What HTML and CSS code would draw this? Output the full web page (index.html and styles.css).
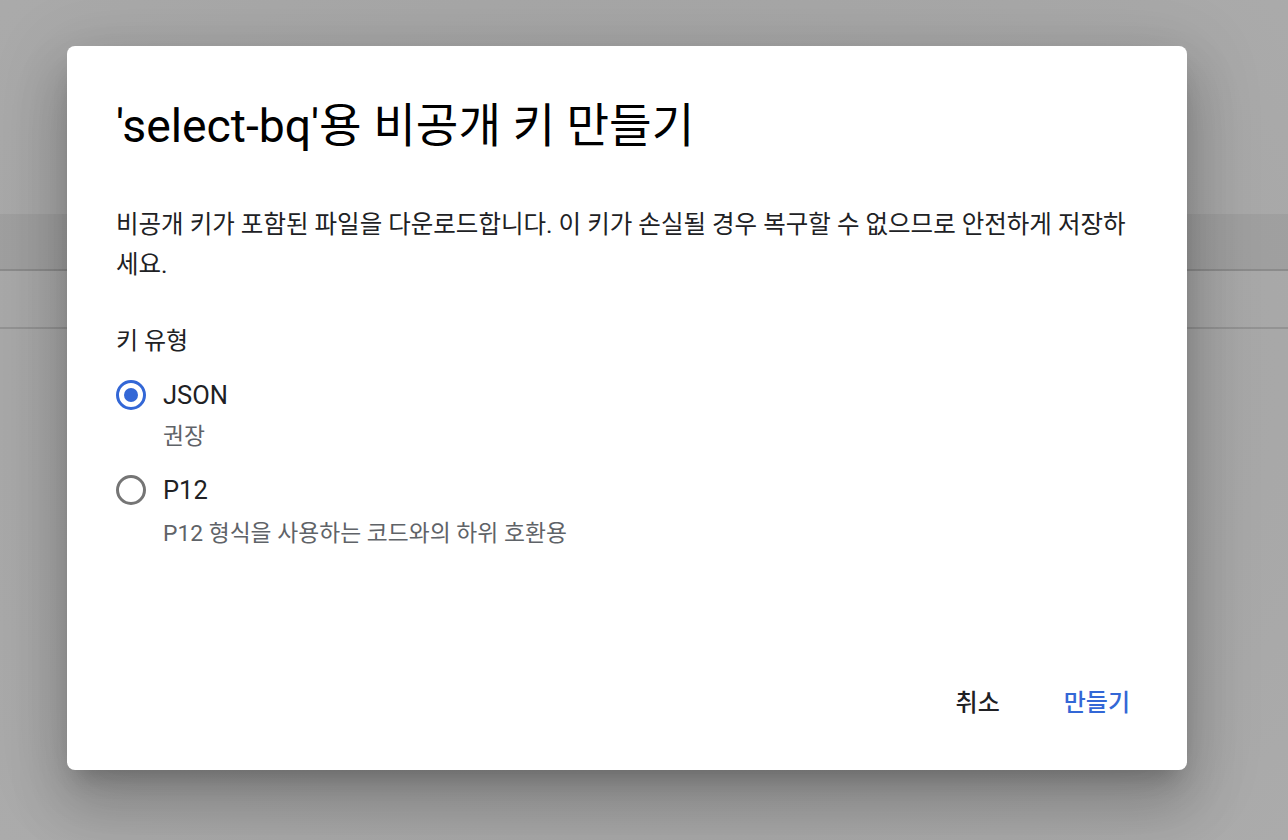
FILE: index.html
```html
<!DOCTYPE html>
<html lang="ko">
<head>
<meta charset="utf-8">
<title>비공개 키 만들기</title>
<link rel="stylesheet" href="styles.css">
</head>
<body>
<div class="page">
  <div class="page-top"></div>
  <div class="page-band"></div>
  <div class="page-row"></div>
  <div class="page-rest"></div>
</div>
<div class="dialog" role="dialog">
  <h1 class="title">'select-bq'용 비공개 키 만들기</h1>
  <p class="desc">비공개 키가 포함된 파일을 다운로드합니다. 이 키가 손실될 경우 복구할 수 없으므로 안전하게 저장하세요.</p>
  <div class="label">키 유형</div>
  <label class="option">
    <span class="radio checked"><span class="dot"></span></span>
    <span class="opt-text">JSON</span>
  </label>
  <div class="hint">권장</div>
  <label class="option option-p12">
    <span class="radio"></span>
    <span class="opt-text">P12</span>
  </label>
  <div class="hint hint-p12">P12 형식을 사용하는 코드와의 하위 호환용</div>
  <div class="actions">
    <button class="btn btn-cancel">취소</button>
    <button class="btn btn-create">만들기</button>
  </div>
</div>
</body>
</html>
```
FILE: styles.css
```css
* { box-sizing: border-box; }
html, body { margin: 0; padding: 0; }
body {
  width: 1288px;
  height: 840px;
  overflow: hidden;
  background: #a8a8a8;
  font-family: Roboto, "Noto Sans CJK KR", sans-serif;
  position: relative;
}
.page {
  display: flex;
  flex-direction: column;
  height: 100%;
  background: radial-gradient(ellipse at 50% 45%, #a0a0a0 0%, #a6a6a6 50%, #ababab 100%);
}
.page-top { height: 214px; }
.page-band {
  height: 57px;
  background: rgba(0,0,0,0.05);
  border-bottom: 2px solid rgba(0,0,0,0.12);
}
.page-row {
  height: 58px;
  border-bottom: 2px solid rgba(0,0,0,0.12);
}
.page-rest { flex: 1; }

.dialog {
  position: absolute;
  left: 67px;
  top: 46px;
  width: 1120px;
  height: 724px;
  background: #fff;
  border-radius: 8px;
  box-shadow: 0 16px 22px -10px rgba(0,0,0,0.2), 0 36px 56px 5px rgba(0,0,0,0.14), 0 14px 70px 12px rgba(0,0,0,0.12);
  padding: 0 45px 42px 49px;
  display: flex;
  flex-direction: column;
  color: #000;
}
.title {
  margin: 54px 0 0;
  font-size: 46.3px;
  font-weight: 400;
  line-height: 53px;
  letter-spacing: 0;
}
.desc {
  margin: 52px 0 0;
  font-size: 24.5px;
  line-height: 40px;
  color: #202124;
}
.label {
  margin-top: 36px;
  font-size: 24px;
  line-height: 40px;
  color: #202124;
}
.option {
  margin-top: 14px;
  display: flex;
  align-items: center;
  gap: 17px;
  height: 40px;
  font-size: 25.5px;
  color: #202124;
}
.option-p12 { margin-top: 17px; }
.radio {
  width: 30px;
  height: 30px;
  border-radius: 50%;
  border: 3.5px solid #757575;
  display: flex;
  align-items: center;
  justify-content: center;
  flex: none;
}
.radio.checked { border-color: #3367d6; }
.dot {
  width: 14px;
  height: 14px;
  border-radius: 50%;
  background: #3367d6;
}
.hint {
  margin-top: 6px;
  padding-left: 47px;
  font-size: 22.8px;
  line-height: 32px;
  color: #5f6368;
}
.hint-p12 { margin-top: 8px; }
.actions {
  margin-top: auto;
  display: flex;
  justify-content: flex-end;
  gap: 40px;
}
.btn {
  height: 56px;
  padding: 0 12px;
  border: 0;
  background: transparent;
  font-family: Roboto, "Noto Sans CJK KR", sans-serif;
  font-size: 24px;
  font-weight: 500;
  cursor: pointer;
}
.btn-cancel { color: #202124; }
.btn-create { color: #3367d6; }
```
